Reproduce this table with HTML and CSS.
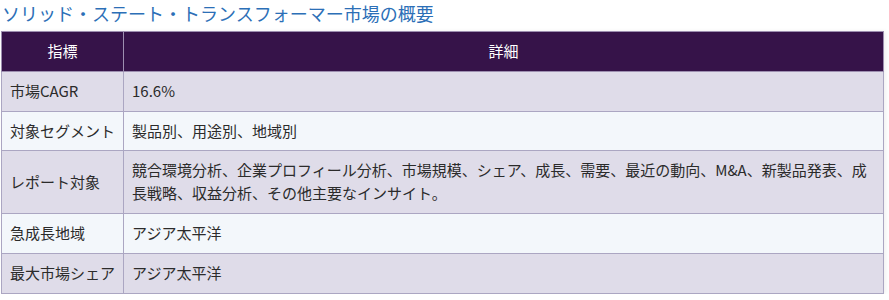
FILE: index.html
```html
<!DOCTYPE html>
<html lang="ja">
<head>
<meta charset="utf-8">
<title>ソリッド・ステート・トランスフォーマー市場の概要</title>
<link rel="stylesheet" href="styles.css">
</head>
<body>
<div class="page">
  <h2 class="title">ソリッド・ステート・トランスフォーマー市場の概要</h2>
  <table class="summary">
    <thead>
      <tr><th class="col-key">指標</th><th>詳細</th></tr>
    </thead>
    <tbody>
      <tr><td>市場CAGR</td><td>16.6%</td></tr>
      <tr><td>対象セグメント</td><td>製品別、用途別、地域別</td></tr>
      <tr><td>レポート対象</td><td>競合環境分析、企業プロフィール分析、市場規模、シェア、成長、需要、最近の動向、M&amp;A、新製品発表、成長戦略、収益分析、その他主要なインサイト。</td></tr>
      <tr><td>急成長地域</td><td>アジア太平洋</td></tr>
      <tr><td>最大市場シェア</td><td>アジア太平洋</td></tr>
    </tbody>
  </table>
</div>
</body>
</html>
```
FILE: styles.css
```css
html, body {
  margin: 0;
  padding: 0;
  background: #ffffff;
}
body {
  font-family: "Noto Sans CJK JP", "Noto Sans", sans-serif;
  color: #2b2b2b;
}
.page {
  padding: 0 5px 0 1px;
}
.title {
  margin: 0 0 5px 1px;
  font-size: 18px;
  font-weight: 400;
  line-height: 26px;
  color: #2c6fb7;
}
.summary {
  width: 883px;
  border-collapse: collapse;
  font-size: 15px;
  line-height: 22.8px;
  box-shadow: 2px 0 4px rgba(0,0,0,0.06);
}
.summary th,
.summary td {
  border: 1px solid #aba6c2;
  padding: 8px 8px;
  text-align: left;
  vertical-align: middle;
  font-weight: 400;
}
.summary th {
  background: #361349;
  color: #ffffff;
  text-align: center;
  border-color: #9d8fb0;
}
.summary .col-key {
  width: 105px;
}
.summary tbody tr:nth-child(odd) td {
  background: #dfdce9;
}
.summary tbody tr:nth-child(even) td {
  background: #f3f7fb;
}
```
